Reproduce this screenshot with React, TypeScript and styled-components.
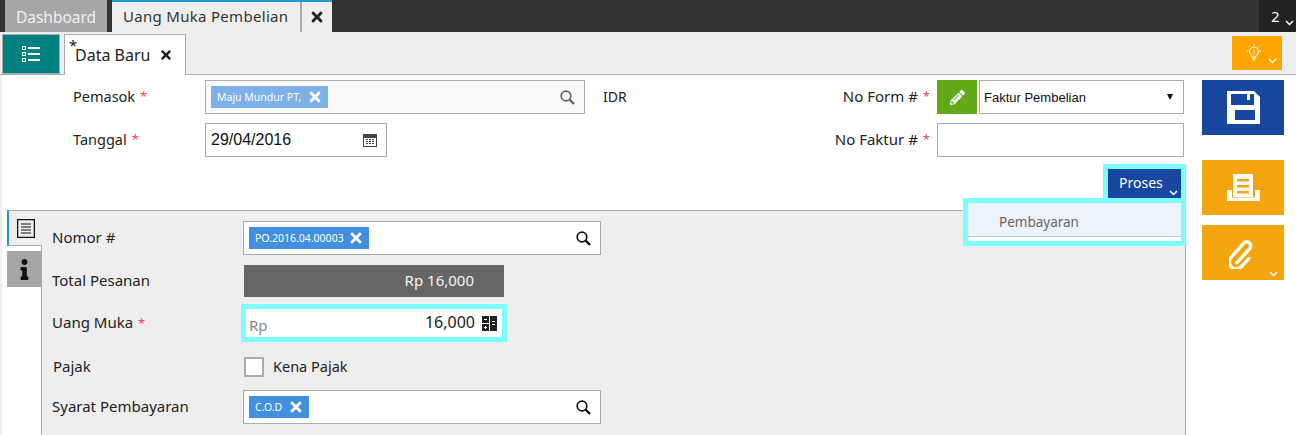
import React from 'react';
import styled, { createGlobalStyle } from 'styled-components';
import { FaTimes, FaPencilAlt, FaInfo } from 'react-icons/fa';

const Global = createGlobalStyle`
  html, body {
    margin: 0;
    padding: 0;
    background: #fff;
    overflow: hidden;
  }
  * {
    box-sizing: border-box;
  }
  body {
    font-family: "Noto Sans", "Open Sans", sans-serif;
    color: #222;
  }
`;

const Page = styled.div`
  width: 1296px;
  height: 435px;
  overflow: hidden;
`;

const TopBar = styled.div`
  display: flex;
  height: 32px;
  padding-left: 5px;
  background: #333;
`;

const DashboardTab = styled.div`
  width: 102px;
  padding-top: 6px;
  margin-right: 5px;
  background: #a6a6a6;
  color: #f2f2f2;
  font-size: 15.5px;
  text-align: center;
`;

const OpenTab = styled.div`
  display: flex;
  height: 32px;
  border-top: 2px solid #1c9ad6;
  background: #eee;
  color: #333;
`;

const OpenTabLabel = styled.div`
  width: 190px;
  padding: 4px 0 0 11px;
  font-size: 15px;
  letter-spacing: 0.3px;
  border-right: 2px solid #aaa;
`;

const OpenTabClose = styled.div`
  width: 30px;
  display: flex;
  align-items: center;
  justify-content: center;
  font-size: 16px;
  color: #222;
`;

const Counter = styled.div`
  position: relative;
  margin-left: auto;
  width: 37px;
  padding: 6px 0 0 12px;
  background: #222;
  color: #fff;
  font-size: 15px;
`;

const SubBar = styled.div`
  display: flex;
  align-items: flex-end;
  height: 43px;
  padding: 0 14px 0 2px;
  background: #eee;
  border-bottom: 1px solid #aaa;
`;

const ListButton = styled.div`
  display: flex;
  align-items: center;
  justify-content: center;
  width: 58px;
  height: 40px;
  margin-right: 4px;
  background: #008080;
  border: 1px solid #aaa;
`;

const FormTab = styled.div`
  position: relative;
  display: flex;
  align-items: center;
  width: 122px;
  height: 41px;
  margin-bottom: -1px;
  padding: 0 0 0 10px;
  background: #fff;
  border: 1px solid #aaa;
  border-bottom: 0;
  font-size: 16px;
  color: #222;
`;

const Dirty = styled.span`
  position: absolute;
  left: 4px;
  top: 0;
  font-size: 15px;
`;

const FormTabClose = styled.span`
  display: flex;
  margin-left: 9px;
  font-size: 14px;
  color: #222;
`;

const HintButton = styled.div`
  position: relative;
  margin: 0 0 4px auto;
  display: flex;
  align-items: center;
  width: 50px;
  height: 34px;
  padding-left: 14px;
  background: #ffa500;
`;

const Body = styled.div`
  display: flex;
  border-left: 2px solid #eee;
`;

const Main = styled.div`
  width: 1200px;
  flex: none;
`;

const Header = styled.div`
  display: grid;
  grid-template-columns: 203px 398px 1fr 247px;
  grid-auto-rows: 34px;
  row-gap: 9px;
  padding: 5px 18px 0 0;
  height: 135px;
  position: relative;
`;

const HeadLabel = styled.div`
  display: flex;
  align-items: center;
  padding: 0 0 2px 71px;
  font-size: 14.5px;
`;

const RightLabel = styled(HeadLabel)`
  justify-content: flex-end;
  padding: 0 7px 2px 0;
  font-size: 15px;
`;

const Star = styled.span`
  margin-left: 5px;
  color: #f2415a;
  font-size: 13px;
`;

const SearchBox = styled.div<{ $tint?: boolean; $width: number }>`
  display: flex;
  align-items: center;
  justify-content: space-between;
  width: ${(p) => p.$width}px;
  height: 34px;
  padding: 0 9px 0 5px;
  background: ${(p) => (p.$tint ? '#f9f9f9' : '#fff')};
  border: 1px solid #aaa;
`;

const Tag = styled.span<{ $muted?: boolean; $width: number }>`
  display: flex;
  align-items: center;
  justify-content: space-between;
  width: ${(p) => p.$width}px;
  height: 22px;
  padding: 0 5px 0 6px;
  background: ${(p) => (p.$muted ? '#7cb0e6' : '#428fdf')};
  color: #fff;
  font-size: 10.5px;
  white-space: nowrap;
`;

const TagClose = styled.span`
  display: flex;
  font-size: 16px;
  color: #fff;
`;

const Currency = styled.span`
  margin-right: auto;
  font-size: 14px;
`;

const FormNumber = styled.div`
  display: flex;
  gap: 2px;
`;

const PenButton = styled.div`
  display: flex;
  align-items: center;
  justify-content: center;
  width: 40px;
  height: 34px;
  background: #62a818;
  color: #fff;
  font-size: 15px;
`;

const FakeSelect = styled.div`
  flex: 1;
  display: flex;
  align-items: center;
  justify-content: space-between;
  padding: 0 10px 0 4px;
  border: 1px solid #aaa;
  font-family: "Liberation Sans", Arial, sans-serif;
  font-size: 13px;
  color: #111;
`;

const Caret = styled.span`
  width: 0;
  height: 0;
  border-left: 3.5px solid transparent;
  border-right: 3.5px solid transparent;
  border-top: 6px solid #111;
`;

const DateInput = styled.div`
  display: flex;
  align-items: center;
  justify-content: space-between;
  width: 182px;
  height: 34px;
  padding: 0 9px 0 5px;
  border: 1px solid #aaa;
  font-family: "Liberation Sans", Arial, sans-serif;
  font-size: 16px;
  color: #111;
`;

const TextInput = styled.div`
  height: 34px;
  border: 1px solid #aaa;
`;

const ProcessOutline = styled.div`
  position: absolute;
  right: 16px;
  top: 89px;
  width: 83px;
  height: 35px;
  border: 5px solid #7dfdff;
  border-bottom: 0;
`;

const ProcessButton = styled.div`
  position: relative;
  height: 30px;
  padding: 4px 0 0 11px;
  background: #17479e;
  color: #fff;
  font-size: 14px;
`;

const ProcessMenu = styled.div`
  position: absolute;
  right: 16px;
  top: 123px;
  z-index: 2;
  width: 223px;
  height: 48px;
  border: 5px solid #7dfdff;
  background: #fff;
`;

const MenuItem = styled.div`
  height: 34px;
  padding: 10px 0 0 31px;
  background: #ecf3fb;
  border-bottom: 1px solid #b4cff0;
  color: #666;
  font-size: 13.5px;
`;

const PanelRow = styled.div`
  display: flex;
  padding-left: 5px;
  margin-right: 16px;
`;

const SideTabs = styled.div`
  width: 34px;
  flex: none;
`;

const DocTab = styled.div`
  position: relative;
  z-index: 1;
  display: flex;
  align-items: center;
  justify-content: center;
  height: 36px;
  margin-right: -1px;
  background: #eee;
  border-top: 1px solid #aaa;
  border-left: 2px solid #1c9ad6;
  border-bottom: 1px solid #aaa;
`;

const InfoTab = styled.div`
  display: flex;
  align-items: center;
  justify-content: center;
  height: 36px;
  margin-top: 5px;
  background: #a6a6a6;
  color: #111;
  font-size: 21px;
`;

const Panel = styled.div`
  flex: 1;
  height: 225px;
  padding-top: 10px;
  background: #eee;
  border-top: 1px solid #aaa;
  border-left: 1px solid #aaa;
  border-right: 1px solid #aaa;
`;

const Row = styled.div<{ $height: number }>`
  display: flex;
  align-items: center;
  height: ${(p) => p.$height}px;
`;

const RowLabel = styled.div<{ $indent?: number }>`
  width: 201px;
  flex: none;
  padding: 0 0 2px ${(p) => p.$indent ?? 10}px;
  font-size: 15px;
`;

const TotalBar = styled.div`
  width: 260px;
  height: 32px;
  margin-left: 1px;
  padding: 5px 30px 0 0;
  background: #666;
  color: #f4f4f4;
  font-size: 15px;
  text-align: right;
`;

const AmountBox = styled.div`
  display: flex;
  align-items: center;
  width: 266px;
  height: 38px;
  margin-left: -2px;
  padding: 0 5px 0 3px;
  background: #fff;
  border: 5px solid #7dfdff;
  font-size: 16px;
`;

const AmountPrefix = styled.span`
  margin-top: 4px;
  color: #888;
  font-size: 15px;
`;

const AmountValue = styled.span`
  margin: 0 7px 3px auto;
  color: #222;
`;

const CheckBox = styled.span`
  display: block;
  width: 20px;
  height: 20px;
  margin-left: 1px;
  background: #fff;
  border: 2px solid #aaa;
`;

const CheckLabel = styled.span`
  margin: 0 0 2px 9px;
  font-size: 14.5px;
`;

const Actions = styled.div`
  display: flex;
  flex-direction: column;
  width: 82px;
  padding-top: 5px;
`;

const ActionButton = styled.div<{ $color: string; $gap: number }>`
  position: relative;
  display: flex;
  align-items: center;
  justify-content: center;
  height: 55px;
  margin-bottom: ${(p) => p.$gap}px;
  background: ${(p) => p.$color};
  color: #fff;
`;

const CornerChevron = styled.span<{ $right: number; $bottom: number }>`
  position: absolute;
  display: flex;
  right: ${(p) => p.$right}px;
  bottom: ${(p) => p.$bottom}px;
`;

const Chevron = () => (
  <svg width="9" height="6" viewBox="0 0 9 6" fill="none" stroke="#fff" strokeWidth="1.5">
    <path d="M1 1l3.500 3.500L8 1" />
  </svg>
);

const SearchIcon = ({ color }: { color: string }) => (
  <svg width="15" height="15" viewBox="0 0 15 15" fill="none" stroke={color}>
    <circle cx="6" cy="6" r="4.800" strokeWidth="1.700" />
    <path d="M9.500 9.500L14 14" strokeWidth="2.400" />
  </svg>
);

const ListIcon = () => (
  <svg width="20" height="18" viewBox="0 0 20 18" fill="#fff">
    <path d="M1 1h4v4H1V1zm1 1v2h2V2H2zM1 7h4v4H1V7zm1 1v2h2V8H2zM1 13h4v4H1v-4zm1 1v2h2v-2H2z" fillRule="evenodd" />
    <path d="M7 2h12v2H7zM7 8h12v2H7zM7 14h12v2H7z" />
  </svg>
);

const BulbIcon = () => (
  <svg width="16" height="18" viewBox="0 0 16 18" fill="none" stroke="#fff" strokeWidth="1">
    <path d="M8 3a4.500 4.500 0 0 0-2.600 8.200c.6.5.7 1 .7 1.800h3.800c0-.8.1-1.300.7-1.800A4.500 4.500 0 0 0 8 3z" />
    <path d="M6.200 14.500h3.600M6.600 16h2.800M8 5.500v4M8 10.500v1M8 0v1.500M1 7h1.500M13.500 7H15M2.800 2l1 1M13.200 2l-1 1" />
  </svg>
);

const CalendarIcon = () => (
  <svg width="14" height="14" viewBox="0 0 14 14">
    <path d="M0 1h14v13H0z" fill="#444" />
    <path d="M1 5h12v8H1z" fill="#fff" />
    <path d="M3 6h2v1H3zM6 6h2v1H6zM9 6h2v1H9zM3 8h2v1H3zM6 8h2v1H6zM9 8h2v1H9zM3 10h2v1H3zM6 10h2v1H6zM9 10h2v1H9z" fill="#444" />
  </svg>
);

const CalculatorIcon = () => (
  <svg width="15" height="15" viewBox="0 0 15 15">
    <path d="M0 0h7v7H0zM8 0h7v15H8zM0 8h7v7H0z" fill="#222" />
    <path d="M2 3h3v1H2zM2 11h3v1H2zM3 10h1v3H3zM10 5h3v1h-3zM10 8h3v1h-3z" fill="#fff" />
  </svg>
);

const DocIcon = () => (
  <svg width="18" height="19" viewBox="0 0 18 19" fill="none" stroke="#111">
    <path d="M.5.500h17v18H.5z" strokeWidth="1.500" />
    <path d="M4 5h10M4 8h10M4 11h10M4 14h10" strokeWidth="1.200" />
  </svg>
);

const SaveIcon = () => (
  <svg width="33" height="33" viewBox="0 0 33 33">
    <path d="M0 0h27l6 6v27H0z" fill="#fff" />
    <path d="M4 3h23v11H4zM8 19h20v10H8z" fill="#17479e" />
    <path d="M20 3h3v6h-3z" fill="#fff" />
  </svg>
);

const PrintIcon = () => (
  <svg width="33" height="29" viewBox="0 0 33 29">
    <path d="M6 1h20v23H6z" fill="#fff" />
    <path d="M10 6h12v2.500H10zM10 12h12v2.500H10zM10 18h12v2.500H10z" fill="#f2a50c" />
    <path d="M0 17h5v7.500h23V17h5v11H0z" fill="#fff" />
  </svg>
);

const ClipIcon = () => (
  <svg width="28" height="32" viewBox="0 0 28 32" fill="none" stroke="#fff" strokeWidth="3.400" strokeLinecap="round">
    <g transform="translate(0 2) rotate(42 14 17)">
      <path d="M20 15v11a7 7 0 0 1-14 0V7a4 4 0 0 1 8 0v19" />
    </g>
  </svg>
);

const App = () => (
  <Page>
    <Global />
    <TopBar>
      <DashboardTab>Dashboard</DashboardTab>
      <OpenTab>
        <OpenTabLabel>Uang Muka Pembelian</OpenTabLabel>
        <OpenTabClose>
          <FaTimes />
        </OpenTabClose>
      </OpenTab>
      <Counter>
        2
        <CornerChevron $right={2} $bottom={6}>
          <Chevron />
        </CornerChevron>
      </Counter>
    </TopBar>

    <SubBar>
      <ListButton>
        <ListIcon />
      </ListButton>
      <FormTab>
        <Dirty>*</Dirty>
        Data Baru
        <FormTabClose>
          <FaTimes />
        </FormTabClose>
      </FormTab>
      <HintButton>
        <BulbIcon />
        <CornerChevron $right={5} $bottom={6}>
          <Chevron />
        </CornerChevron>
      </HintButton>
    </SubBar>

    <Body>
      <Main>
        <Header>
          <HeadLabel>
            Pemasok<Star>*</Star>
          </HeadLabel>
          <SearchBox $tint $width={380}>
            <Tag $muted $width={117}>
              Maju Mundur PT,
              <TagClose>
                <FaTimes />
              </TagClose>
            </Tag>
            <SearchIcon color="#666" />
          </SearchBox>
          <RightLabel>
            <Currency>IDR</Currency>
            No Form #<Star>*</Star>
          </RightLabel>
          <FormNumber>
            <PenButton>
              <FaPencilAlt />
            </PenButton>
            <FakeSelect>
              Faktur Pembelian
              <Caret />
            </FakeSelect>
          </FormNumber>

          <HeadLabel>
            Tanggal<Star>*</Star>
          </HeadLabel>
          <div>
            <DateInput>
              29/04/2016
              <CalendarIcon />
            </DateInput>
          </div>
          <RightLabel>
            No Faktur #<Star>*</Star>
          </RightLabel>
          <TextInput />

          <ProcessOutline>
            <ProcessButton>
              Proses
              <CornerChevron $right={3} $bottom={3}>
                <Chevron />
              </CornerChevron>
            </ProcessButton>
          </ProcessOutline>
          <ProcessMenu>
            <MenuItem>Pembayaran</MenuItem>
          </ProcessMenu>
        </Header>

        <PanelRow>
          <SideTabs>
            <DocTab>
              <DocIcon />
            </DocTab>
            <InfoTab>
              <FaInfo />
            </InfoTab>
          </SideTabs>
          <Panel>
            <Row $height={34}>
              <RowLabel>Nomor #</RowLabel>
              <SearchBox $width={358}>
                <Tag $width={120}>
                  PO.2016.04.00003
                  <TagClose>
                    <FaTimes />
                  </TagClose>
                </Tag>
                <SearchIcon color="#111" />
              </SearchBox>
            </Row>
            <Row $height={52}>
              <RowLabel>Total Pesanan</RowLabel>
              <TotalBar>Rp 16,000</TotalBar>
            </Row>
            <Row $height={32}>
              <RowLabel>
                Uang Muka<Star>*</Star>
              </RowLabel>
              <AmountBox>
                <AmountPrefix>Rp</AmountPrefix>
                <AmountValue>16,000</AmountValue>
                <CalculatorIcon />
              </AmountBox>
            </Row>
            <Row $height={56}>
              <RowLabel $indent={11}>Pajak</RowLabel>
              <CheckBox />
              <CheckLabel>Kena Pajak</CheckLabel>
            </Row>
            <Row $height={24}>
              <RowLabel>Syarat Pembayaran</RowLabel>
              <SearchBox $width={358}>
                <Tag $width={60}>
                  C.O.D
                  <TagClose>
                    <FaTimes />
                  </TagClose>
                </Tag>
                <SearchIcon color="#111" />
              </SearchBox>
            </Row>
          </Panel>
        </PanelRow>
      </Main>

      <Actions>
        <ActionButton $color="#17479e" $gap={25}>
          <SaveIcon />
        </ActionButton>
        <ActionButton $color="#f2a50c" $gap={10}>
          <PrintIcon />
        </ActionButton>
        <ActionButton $color="#f2a50c" $gap={0}>
          <ClipIcon />
          <CornerChevron $right={6} $bottom={3}>
            <Chevron />
          </CornerChevron>
        </ActionButton>
      </Actions>
    </Body>
  </Page>
);

export default App;
